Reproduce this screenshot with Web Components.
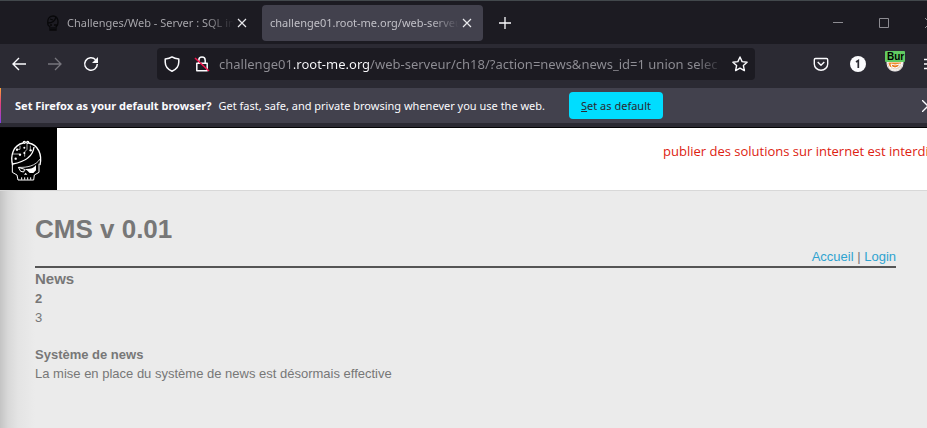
<!DOCTYPE html>
<html lang="fr">
<head>
<meta charset="utf-8">
<meta name="viewport" content="width=device-width">
<title>CMS v 0.01</title>
<style>
html, body { margin: 0; min-height: 100%; background: #ebebeb; }
body { min-height: 100vh; display: flex; flex-direction: column; overflow: hidden; font-family: "Noto Sans", "Open Sans", sans-serif; }
cms-page { flex: 1; }
</style>
</head>
<body>
<tab-strip>
  <browser-tab icon>Challenges/Web - Server : SQL injection</browser-tab>
  <browser-tab active>challenge01.root-me.org/web-serveur</browser-tab>
</tab-strip>
<nav-toolbar></nav-toolbar>
<default-notice>
  <b slot="lead">Set Firefox as your default browser?</b>
  Get fast, safe, and private browsing whenever you use the web.
</default-notice>
<site-header>publier des solutions sur internet est interdi</site-header>
<cms-page></cms-page>
<script>
const BASE = `<style>
*,:host{box-sizing:border-box}
button{appearance:none;border:0;padding:0;margin:0;background:none;color:inherit;font:inherit;display:grid;place-items:center;flex:none}
svg{display:block;fill:none;stroke:currentColor}
</style>`;
function define(name, html) {
  const t = document.createElement('template');
  t.innerHTML = BASE + html;
  customElements.define(name, class extends HTMLElement {
    constructor() {
      super();
      this.attachShadow({ mode: 'open' }).append(t.content.cloneNode(true));
    }
  });
}

define('browser-tab', `<style>
:host{display:flex;align-items:center;width:221px;height:36px;padding:0 8px;border-radius:4px;color:#a6a5aa;font-size:11px}
:host([active]){background:#42414d;color:#c1c0c7}
.icon{display:none;flex:none;margin:0 8px 0 2px;color:#08080a}
:host([icon]) .icon{display:block}
.label{flex:1;min-width:0;display:block;text-align:left;white-space:nowrap;overflow:hidden;-webkit-mask:linear-gradient(to left,transparent,#000 28px);mask:linear-gradient(to left,transparent,#000 28px)}
.close{width:16px;height:20px;color:#e8e8ec}
</style>
<svg class="icon" width="12" height="16" viewBox="0 0 12 16" stroke-width="1.3"><path d="M1 10C0 4 2 1 6 1s6 4 4.500 9L9 12v3H3v-3zM1 8c4 0 7-2 8-6M3 4l3 1M3 10h2m2 0h3M5 12v3m2-3v3"/></svg>
<button class="label" role="tab"><slot></slot></button>
<button class="close" aria-label="Close tab"><svg width="10" height="10" viewBox="0 0 10 10" stroke-width="1.2"><path d="m1 1 8 8m0-8-8 8"/></svg></button>`);

define('tab-strip', `<style>
:host{display:flex;align-items:center;height:44px;border-top:1px solid #42484c;background:#1c1b22;padding-left:37px;overflow:hidden}
.tabs{display:flex;gap:4px}
.new{width:40px;height:36px;color:#fbfbfe;margin-left:2px}
.win{margin-left:auto;display:flex;margin-right:-26px;color:#8d8c92}
.win button{width:46px;height:36px}
</style>
<div class="tabs" role="tablist"><slot></slot></div>
<button class="new" aria-label="New tab"><svg width="12" height="12" viewBox="0 0 12 12" stroke-width="1.300"><path d="M6 0v12M0 6h12"/></svg></button>
<div class="win">
<button aria-label="Minimize"><svg width="10" height="10" viewBox="0 0 10 10"><path d="M0 4.500h10"/></svg></button>
<button aria-label="Maximize"><svg width="10" height="10" viewBox="0 0 10 10"><path d="M.5.5h9v9h-9z"/></svg></button>
<button aria-label="Close"><svg width="10" height="10" viewBox="0 0 10 10"><path d="m0 0 10 10m0-10L0 10"/></svg></button>
</div>`);

define('nav-toolbar', `<style>
:host{display:flex;align-items:center;height:44px;background:#2b2a33;color:#fbfbfe;padding:0 0 4px 1px;overflow:hidden}
.nav button{width:36px;height:32px}
.nav{display:flex;margin-right:48px}
.nav button:disabled{color:#77767d}
.url{flex:1;min-width:0;height:32px;display:flex;align-items:center;background:#1c1b22;border-radius:4px}
.url button{width:30px;height:32px}
input{flex:1;min-width:0;height:30px;margin-left:2px;border:0;outline:0;padding:0;font:13px "Noto Sans","Open Sans",sans-serif;
 color:transparent;-webkit-text-fill-color:transparent;
 background:linear-gradient(to right,#8f8e95 75px,#fbfbfe 75px 151px,#8f8e95 151px calc(100% - 28px),transparent calc(100% - 2px));-webkit-background-clip:text;background-clip:text}
.end{display:flex;margin:0 -22px 0 48px;gap:2px}
.end button{width:35px;height:32px}
.burp{position:relative}
.burp b{position:absolute;left:8px;top:3px;width:20px;height:11px;overflow:hidden;border-radius:1px;background:#62cb62;color:#000;font:bold 10px/12px "Liberation Sans",sans-serif;padding-left:2px;text-align:left}
</style>
<div class="nav">
<button aria-label="Back"><svg width="16" height="16" viewBox="0 0 16 16" stroke-width="1.400"><path d="M15 8H2m6-6L2 8l6 6"/></svg></button>
<button aria-label="Forward" disabled><svg width="16" height="16" viewBox="0 0 16 16" stroke-width="1.300"><path d="M1 8h13M8 2l6 6-6 6"/></svg></button>
<button aria-label="Reload"><svg width="16" height="16" viewBox="0 0 16 16" stroke-width="1.500"><path d="M14.300 8A6.300 6.300 0 1 1 12.600 3.700"/><path d="M15 1v6H9z" fill="currentColor" stroke="none"/></svg></button>
</div>
<div class="url">
<button aria-label="Tracking protection"><svg width="16" height="16" viewBox="0 0 16 16" stroke-width="1.500"><path d="M8 .9C6 2.300 3.700 2.800 1.200 3v3C1.200 10 4 13.500 8 15.200c4-1.700 6.800-5.200 6.800-9.200V3C12.300 2.800 10 2.300 8 .9z" stroke-linejoin="round"/></svg></button>
<button aria-label="Connection not secure"><svg width="16" height="16" viewBox="0 0 16 16" stroke-width="1.500"><path d="M4.800 7V4.300a3.200 3.200 0 0 1 6.400 0V7M2.800 7.200h10.400v7.500H2.800z" stroke-linejoin="round"/><path d="m1 2 14 13" stroke="#f0144c" stroke-width="1.600"/></svg></button>
<input type="text" aria-label="Address" value="challenge01.root-me.org/web-serveur/ch18/?action=news&amp;news_id=1 union selec">
<button aria-label="Bookmark this page"><svg width="16" height="16" viewBox="0 0 16 16" stroke-width="1.400"><path d="m8 1 2.100 4.600 5 .6-3.700 3.400 1 5L8 12.100l-4.400 2.500 1-5L.9 6.200l5-.6z" stroke-linejoin="round"/></svg></button>
</div>
<div class="end">
<button aria-label="Pocket"><svg width="16" height="16" viewBox="0 0 16 16" stroke-width="1.400"><path d="M2.500 2.500h11q1.200 0 1.200 1.200V8a6.700 6.200 0 0 1-13.400 0V3.700q0-1.200 1.200-1.200zM4.700 6 8 9.200 11.300 6" stroke-linejoin="round"/></svg></button>
<button aria-label="Account"><svg width="16" height="16" viewBox="0 0 16 16"><circle cx="8" cy="8" r="8" fill="#fbfbfe" stroke="none"/><path d="M6 6l2.300-1.500V12" stroke="#2b2a33" stroke-width="1.700"/></svg></button>
<button class="burp" aria-label="Burp"><svg width="18" height="18" viewBox="0 0 18 18" stroke="none"><path d="M1 7h16c0 6-3 9-8 9S1 13 1 7z" fill="#c9a88a"/><path d="M2 7h14c0 4-3 8-7 8S2 11 2 7z" fill="#ef8a29"/><path d="m3 12 3 1 6-2 4-3c-1 5-3 7-7 7-3 0-5-1-6-3z" fill="#e9d5c1"/><path d="m5 9 4 1 5-1-2 3-3 1-3-1z" fill="#e77b1c"/></svg><b>Bur</b></button>
<button aria-label="Menu"><svg width="16" height="16" viewBox="0 0 16 16" stroke-width="1.300"><path d="M0 3.500h14M0 8h14M0 12.500h14"/></svg></button>
</div>`);

define('default-notice', `<style>
:host{display:block;background:#2b2a33;padding-bottom:4px;border-bottom:1px solid #050507;overflow:hidden}
.bar{display:flex;align-items:center;height:35px;background:#42414d;color:#fbfbfe;font-size:11px;white-space:nowrap}
.bar::before{content:"";width:1px;align-self:stretch;background:linear-gradient(#ffa436,#e2407e 45%,#8341e8);margin-right:14px}
::slotted(b){font-weight:700;margin-right:7px}
.set{height:27px;padding:0 12px;margin-left:24px;border-radius:4px;background:#00ddff;color:#2b2a33}
.x{margin-left:auto;margin-right:-9px;width:16px;height:30px}
</style>
<div class="bar"><slot name="lead"></slot><span><slot></slot></span>
<button class="set"><div><u>S</u>et as default</div></button>
<button class="x" aria-label="Dismiss"><svg width="12" height="12" viewBox="0 0 12 12" stroke-width="1.300"><path d="m0 0 12 12m0-12L0 12"/></svg></button></div>`);

define('site-header', `<style>
:host{display:flex;background:#fff;border-bottom:1px solid #d8d8d8;overflow:hidden}
a{flex:none;background:#000;color:#fff}
p{margin:13px 0 0 auto;width:264px;flex:none;white-space:nowrap;color:#dd2211;font:13px/20px "Open Sans","Noto Sans",sans-serif}
</style>
<a href="#" aria-label="Root Me"><svg width="57" height="62" viewBox="0 0 171 186" stroke-width="4">
<path d="M38 112C30 82 40 51 70 45m16 0c29 5 41 36 34 66"/><circle cx="73" cy="43" r="3"/><circle cx="83" cy="43" r="3"/>
<path d="M102 57C99 84 76 101 38 108"/><path d="M121 92c-14 22-40 27-64 26" stroke-width="2.500"/>
<path d="M81 47v17l-7 8v14M60 53v11h-9M38 78h20M91 53v13" stroke-width="2"/>
<g fill="currentColor" stroke="none"><circle cx="51" cy="65" r="3.500"/><circle cx="73" cy="59" r="3"/><circle cx="92" cy="67" r="3.500"/><circle cx="73" cy="75" r="3"/><circle cx="60" cy="80" r="3.500"/><circle cx="47" cy="92" r="3.500"/><path d="M79 123c13 0 22-3 29-12v16l-8 8H89l-9-9-7 1zM77 134l5 6H72z"/></g>
<path d="M37 108v25l14 8 3 15h47l2-15 14-8v-26M55 118l19 6-3 8-9-2zM65 155v-7m9 7v-7m9 7v-7m9 7v-7" stroke-width="3"/></svg></a>
<p><slot></slot></p>`);

define('cms-page', `<style>
:host{display:block;padding:20px 31px 20px 35px;color:#777;font:13px/19px "Liberation Sans",Arial,sans-serif;background:linear-gradient(to right,#c4c4c4,#d8d8d8 8px,#e4e4e4 18px,#ebebeb 35px)}
h1{margin:0;font-size:26px;line-height:36px}
nav{text-align:right;border-bottom:2px solid #555;color:#777}
a{color:#2fa3d0;text-decoration:none}
h2{margin:1px 0 0;font-size:15px;line-height:20px}
h3,p{margin:0;font-size:13px;line-height:19px}
section+section{margin-top:18px}
</style>
<h1>CMS v 0.01</h1>
<nav><a href="#">Accueil</a> | <a href="#">Login</a></nav>
<h2>News</h2>
<section><h3>2</h3><p>3</p></section>
<section><h3>Système de news</h3><p>La mise en place du système de news est désormais effective</p></section>`);
</script>
</body>
</html>
